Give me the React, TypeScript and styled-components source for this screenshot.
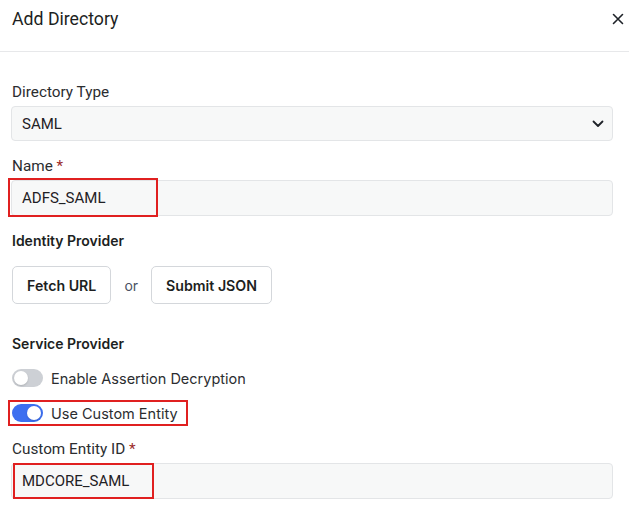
import React, { useState } from 'react'
import styled, { createGlobalStyle } from 'styled-components'

const GlobalStyle = createGlobalStyle`
    html, body {
        margin: 0;
        padding: 0;
        background: #ffffff;
    }
    body {
        font-family: Roboto, "Liberation Sans", sans-serif;
        color: #222;
    }
    * {
        box-sizing: border-box;
    }
`

type ToggleRowProps = {
    label: string
    on: boolean
    marked?: boolean
}

const ToggleRow = ({label, on, marked}: ToggleRowProps) => {
    const [checked, setChecked] = useState(on)
    return (
        <ToggleLine $marked={marked} onClick={() => setChecked(!checked)}>
            <Track $on={checked}>
                <Knob/>
            </Track>
            <ToggleLabel>{label}</ToggleLabel>
        </ToggleLine>
    )
}

export default function App() {
    return (
        <>
            <GlobalStyle/>
            <Modal>
                <Header>
                    <Title>Add Directory</Title>
                    <CloseButton aria-label="close">
                        <svg width="12" height="12" viewBox="0 0 12 12">
                            <path d="M1.5 1.5 L10.5 10.5 M10.5 1.5 L1.5 10.5" stroke="#1f2329" strokeWidth="1.6"
                                  strokeLinecap="round"/>
                        </svg>
                    </CloseButton>
                </Header>
                <Body>
                    <Field>
                        <Label>Directory Type</Label>
                        <SelectBox>
                            <span>SAML</span>
                            <svg width="12" height="8" viewBox="0 0 12 8">
                                <path d="M1.5 1.5 L6 6 L10.5 1.5" stroke="#1f2329" strokeWidth="1.8" fill="none"
                                      strokeLinecap="round" strokeLinejoin="round"/>
                            </svg>
                        </SelectBox>
                    </Field>
                    <Field>
                        <Label>Name <Required>*</Required></Label>
                        <InputBox>
                            <Value>ADFS_SAML</Value>
                            <Highlight $width={150}/>
                        </InputBox>
                    </Field>

                    <Section>
                        <SectionTitle>Identity Provider</SectionTitle>
                        <ButtonRow>
                            <OutlineButton>Fetch URL</OutlineButton>
                            <OrText>or</OrText>
                            <OutlineButton>Submit JSON</OutlineButton>
                        </ButtonRow>
                    </Section>

                    <Section>
                        <SectionTitle>Service Provider</SectionTitle>
                        <Toggles>
                            <ToggleRow label="Enable Assertion Decryption" on={false}/>
                            <ToggleRow label="Use Custom Entity" on={true} marked/>
                        </Toggles>
                        <Field>
                            <Label>Custom Entity ID <Required>*</Required></Label>
                            <InputBox>
                                <Value>MDCORE_SAML</Value>
                                <Highlight $width={141} $inset/>
                            </InputBox>
                        </Field>
                    </Section>
                </Body>
            </Modal>
        </>
    )
}

const Modal = styled.div`
    width: 629px;
    height: 508px;
    overflow: hidden;
    background: #fff;
`

const Header = styled.div`
    height: 52px;
    display: flex;
    align-items: flex-start;
    justify-content: space-between;
    padding: 7px 0 0 12px;
    border-bottom: 1px solid #e7e8ea;
`

const Title = styled.h2`
    margin: 0;
    font-size: 17.7px;
    font-weight: 400;
    color: #1d1f22;
    line-height: 24px;
`

const CloseButton = styled.button`
    border: none;
    background: none;
    padding: 0;
    width: 22px;
    height: 24px;
    display: flex;
    align-items: center;
    justify-content: center;
    cursor: pointer;
`

const Body = styled.div`
    padding: 30px 16px 0 11px;
`

const Field = styled.div`
    margin-bottom: 15px;
`

const Label = styled.div`
    font-size: 15.3px;
    line-height: 20px;
    color: #2b2d30;
    margin: 0 0 4px 1px;
`

const Required = styled.span`
    color: #9b2a2a;
`

const SelectBox = styled.div`
    height: 35px;
    border: 1px solid #e3e5e7;
    border-radius: 4px;
    background: #f7f8f8;
    display: flex;
    align-items: center;
    justify-content: space-between;
    padding: 0 8px 0 10px;
    font-size: 15px;
    color: #1f2125;
`

const InputBox = styled.div`
    position: relative;
    height: 36px;
    border: 1px solid #e3e5e7;
    border-radius: 4px;
    background: #f7f8f8;
    display: flex;
    align-items: center;
    padding: 0 10px;
`

const Value = styled.span`
    font-size: 15px;
    color: #1f2125;
`

// red outline drawn over the start of a field
const Highlight = styled.div<{ $width: number, $inset?: boolean }>`
    position: absolute;
    left: ${p => p.$inset ? '1px' : '-4px'};
    top: ${p => p.$inset ? '-1px' : '-3px'};
    bottom: ${p => p.$inset ? '-1px' : '-2px'};
    width: ${p => p.$width}px;
    border: 2px solid #e02020;
    pointer-events: none;
`

const Section = styled.div`
    margin-top: 3px;
`

const SectionTitle = styled.div`
    font-family: Inter, "Noto Sans", sans-serif;
    font-weight: 600;
    font-size: 14px;
    line-height: 20px;
    color: #1d1f22;
    margin: 0 0 15px 1px;
`

const ButtonRow = styled.div`
    display: flex;
    align-items: center;
    gap: 13px;
    margin: 0 0 30px 1px;
`

const OutlineButton = styled.button`
    height: 38px;
    padding: 0 14px;
    border: 1px solid #d4d7db;
    border-radius: 5px;
    background: #fff;
    font-family: Inter, "Noto Sans", sans-serif;
    font-weight: 600;
    font-size: 14.2px;
    color: #1d1f22;
`

const OrText = styled.span`
    font-family: Inter, "Noto Sans", sans-serif;
    font-size: 14px;
    color: #4a5262;
`

const Toggles = styled.div`
    display: flex;
    flex-direction: column;
    gap: 9px;
    margin-top: -4px;
    margin-bottom: 13px;
`

const ToggleLine = styled.div<{ $marked?: boolean }>`
    align-self: flex-start;
    display: flex;
    align-items: center;
    gap: 8px;
    height: 26px;
    padding: 0 10px 0 1px;
    margin-left: ${p => p.$marked ? '-3px' : '0'};
    padding-left: ${p => p.$marked ? '4px' : '1px'};
    outline: ${p => p.$marked ? '2px solid #e02020' : 'none'};
    outline-offset: -2px;
    cursor: pointer;
`

const Track = styled.div<{ $on: boolean }>`
    width: 31px;
    height: 18px;
    border-radius: 9px;
    padding: 2px;
    background: ${p => p.$on ? '#3d6ff0' : '#cdd0d5'};
    display: flex;
    justify-content: ${p => p.$on ? 'flex-end' : 'flex-start'};
`

const Knob = styled.div`
    width: 14px;
    height: 14px;
    border-radius: 50%;
    background: #fff;
    box-shadow: 0 1px 2px rgba(0, 0, 0, 0.15);
`

const ToggleLabel = styled.span`
    font-family: Inter, "Noto Sans", sans-serif;
    font-size: 14.5px;
    color: #2b2d30;
`
